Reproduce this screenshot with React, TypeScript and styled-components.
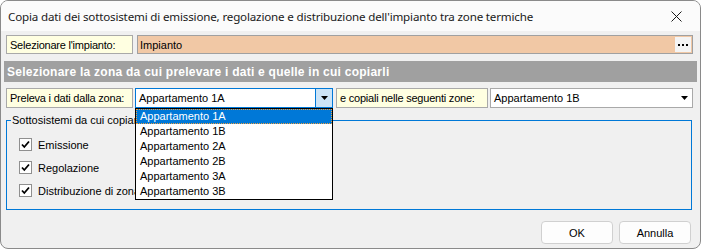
import React from "react";
import styled, { createGlobalStyle } from "styled-components";

const GlobalStyle = createGlobalStyle`
  html, body {
    margin: 0;
    padding: 0;
    background: #ffffff;
  }
  * {
    box-sizing: border-box;
  }
`;

const Window = styled.div`
  position: relative;
  width: 701px;
  height: 249px;
  border: 1px solid #8a8a8a;
  border-radius: 8px;
  overflow: hidden;
  background: #f0f0f0;
  font-family: "Liberation Sans", Arial, sans-serif;
  font-size: 11px;
  color: #000;
  display: flex;
  flex-direction: column;
`;

const TitleBar = styled.div`
  height: 30px;
  flex: none;
  display: flex;
  align-items: center;
  justify-content: space-between;
  padding: 0 18px 0 7px;
  background: #fbfbfb;
  font-family: "Noto Sans", "Liberation Sans", sans-serif;
  font-size: 11.6px;
  letter-spacing: -0.17px;
  color: #1a1a1a;
`;

const Body = styled.div`
  flex: 1;
  display: flex;
  flex-direction: column;
  padding: 4px 3px 0 3px;
`;

const Row = styled.div<{ $top?: number }>`
  display: flex;
  align-items: stretch;
  margin: ${(p) => p.$top ?? 0}px 4px 0 2px;
  height: ${(p) => (p.$top ? 20 : 19)}px;
`;

const Label = styled.div<{ $w: number; $ml?: number }>`
  width: ${(p) => p.$w}px;
  margin-left: ${(p) => p.$ml ?? 0}px;
  flex: none;
  background: #ffffe1;
  border: 1px solid #a9a9a9;
  display: flex;
  align-items: center;
  padding-left: 3px;
  white-space: nowrap;
  letter-spacing: -0.22px;
`;

const Field = styled.div`
  flex: 1;
  margin-left: 4px;
  background: #f1c8a5;
  border: 1px solid #a0a0a0;
  display: flex;
  align-items: center;
  justify-content: space-between;
  padding-left: 2px;
`;

const DotsButton = styled.div`
  width: 16px;
  height: 15px;
  margin-right: 1px;
  background: #f4f4f4;
  display: flex;
  align-items: center;
  justify-content: center;
  gap: 2px;
`;

const Dot = styled.span`
  width: 2px;
  height: 2px;
  background: #000;
`;

const Header = styled.div`
  margin-top: 7px;
  height: 21px;
  background: #a0a0a0;
  color: #ffffff;
  font-weight: bold;
  font-size: 12px;
  display: flex;
  align-items: center;
  padding-left: 3px;
  letter-spacing: 0.25px;
`;

const ComboWrap = styled.div<{ $w: number; $ml: number }>`
  position: relative;
  width: ${(p) => p.$w}px;
  margin-left: ${(p) => p.$ml}px;
  flex: none;
`;

const Combo = styled.div<{ $focused?: boolean }>`
  height: 100%;
  background: #fff;
  border: 1px solid ${(p) => (p.$focused ? "#0078d7" : "#a9a9a9")};
  display: flex;
  align-items: center;
  justify-content: space-between;
  padding-left: 3px;
`;

const ArrowBox = styled.div<{ $focused?: boolean }>`
  width: 17px;
  height: 100%;
  display: flex;
  align-items: center;
  justify-content: center;
  background: ${(p) => (p.$focused ? "#cce4f7" : "transparent")};
  border-left: 1px solid ${(p) => (p.$focused ? "#0078d7" : "transparent")};
`;

const List = styled.div`
  position: absolute;
  top: 100%;
  left: 0;
  width: 100%;
  background: #fff;
  border: 1px solid #000;
  z-index: 10;
`;

const Item = styled.div<{ $selected?: boolean }>`
  height: 15px;
  line-height: 15px;
  padding-left: 4px;
  white-space: nowrap;
  background: ${(p) => (p.$selected ? "#0078d7" : "#fff")};
  color: ${(p) => (p.$selected ? "#fff" : "#000")};
  outline: ${(p) => (p.$selected ? "1px dotted #f0a040" : "none")};
  outline-offset: -1px;
`;

const Group = styled.fieldset`
  margin: 6px 5px 0 2px;
  height: 96px;
  border: 1px solid #0078d7;
  padding: 0 0 0 12px;
  display: flex;
  flex-direction: column;
`;

const Legend = styled.legend`
  padding: 0 1px;
  margin-left: -8px;
  line-height: 13px;
`;

const CheckRow = styled.div`
  display: flex;
  align-items: center;
  gap: 6px;
  height: 23px;
`;

const Box = styled.div`
  width: 13px;
  height: 13px;
  background: #fff;
  border: 1px solid #8f8f8f;
  display: flex;
  align-items: center;
  justify-content: center;
`;

const Checks = styled.div`
  display: flex;
  flex-direction: column;
  margin-top: 6px;
`;

const Footer = styled.div`
  display: flex;
  justify-content: flex-end;
  gap: 6px;
  margin-top: 11px;
  padding-right: 6px;
`;

const Button = styled.div`
  width: 72px;
  height: 23px;
  background: #fdfdfd;
  border: 1px solid #d0d0d0;
  border-radius: 4px;
  display: flex;
  align-items: center;
  justify-content: center;
  font-size: 11px;
`;

const Arrow = () => (
  <svg width="7" height="4" viewBox="0 0 7 4">
    <path d="M0 0H7L3.5 4Z" fill="#000" />
  </svg>
);

const CheckMark = () => (
  <svg width="9" height="9" viewBox="0 0 9 9">
    <path d="M1 4.5L3.3 7L8 1.5" stroke="#000" strokeWidth="1.8" fill="none" />
  </svg>
);

const CloseIcon = () => (
  <svg width="11" height="11" viewBox="0 0 11 11">
    <path d="M0.5 0.5L10.5 10.5M10.5 0.5L0.5 10.5" stroke="#1a1a1a" strokeWidth="1" />
  </svg>
);

const zones = [
  "Appartamento 1A",
  "Appartamento 1B",
  "Appartamento 2A",
  "Appartamento 2B",
  "Appartamento 3A",
  "Appartamento 3B",
];

const subsystems = ["Emissione", "Regolazione", "Distribuzione di zona"];

export default function App() {
  return (
    <>
      <GlobalStyle />
      <Window>
        <TitleBar>
          <span>
            Copia dati dei sottosistemi di emissione, regolazione e distribuzione
            dell'impianto tra zone termiche
          </span>
          <CloseIcon />
        </TitleBar>
        <Body>
          <Row>
            <Label $w={127}>Selezionare l'impianto:</Label>
            <Field>
              <span>Impianto</span>
              <DotsButton>
                <Dot />
                <Dot />
                <Dot />
              </DotsButton>
            </Field>
          </Row>
          <Header>Selezionare la zona da cui prelevare i dati e quelle in cui copiarli</Header>
          <Row $top={6}>
            <Label $w={127}>Preleva i dati dalla zona:</Label>
            <ComboWrap $w={198} $ml={2}>
              <Combo $focused>
                <span>Appartamento 1A</span>
                <ArrowBox $focused>
                  <Arrow />
                </ArrowBox>
              </Combo>
              <List>
                {zones.map((z, i) => (
                  <Item key={z} $selected={i === 0}>
                    {z}
                  </Item>
                ))}
              </List>
            </ComboWrap>
            <Label $w={152} $ml={3}>e copiali nelle seguenti zone:</Label>
            <ComboWrap $w={203} $ml={2}>
              <Combo>
                <span>Appartamento 1B</span>
                <ArrowBox>
                  <Arrow />
                </ArrowBox>
              </Combo>
            </ComboWrap>
          </Row>
          <Group>
            <Legend>Sottosistemi da cui copiare i dati</Legend>
            <Checks>
              {subsystems.map((s) => (
                <CheckRow key={s}>
                  <Box>
                    <CheckMark />
                  </Box>
                  <span>{s}</span>
                </CheckRow>
              ))}
            </Checks>
          </Group>
          <Footer>
            <Button>OK</Button>
            <Button>Annulla</Button>
          </Footer>
        </Body>
      </Window>
    </>
  );
}
